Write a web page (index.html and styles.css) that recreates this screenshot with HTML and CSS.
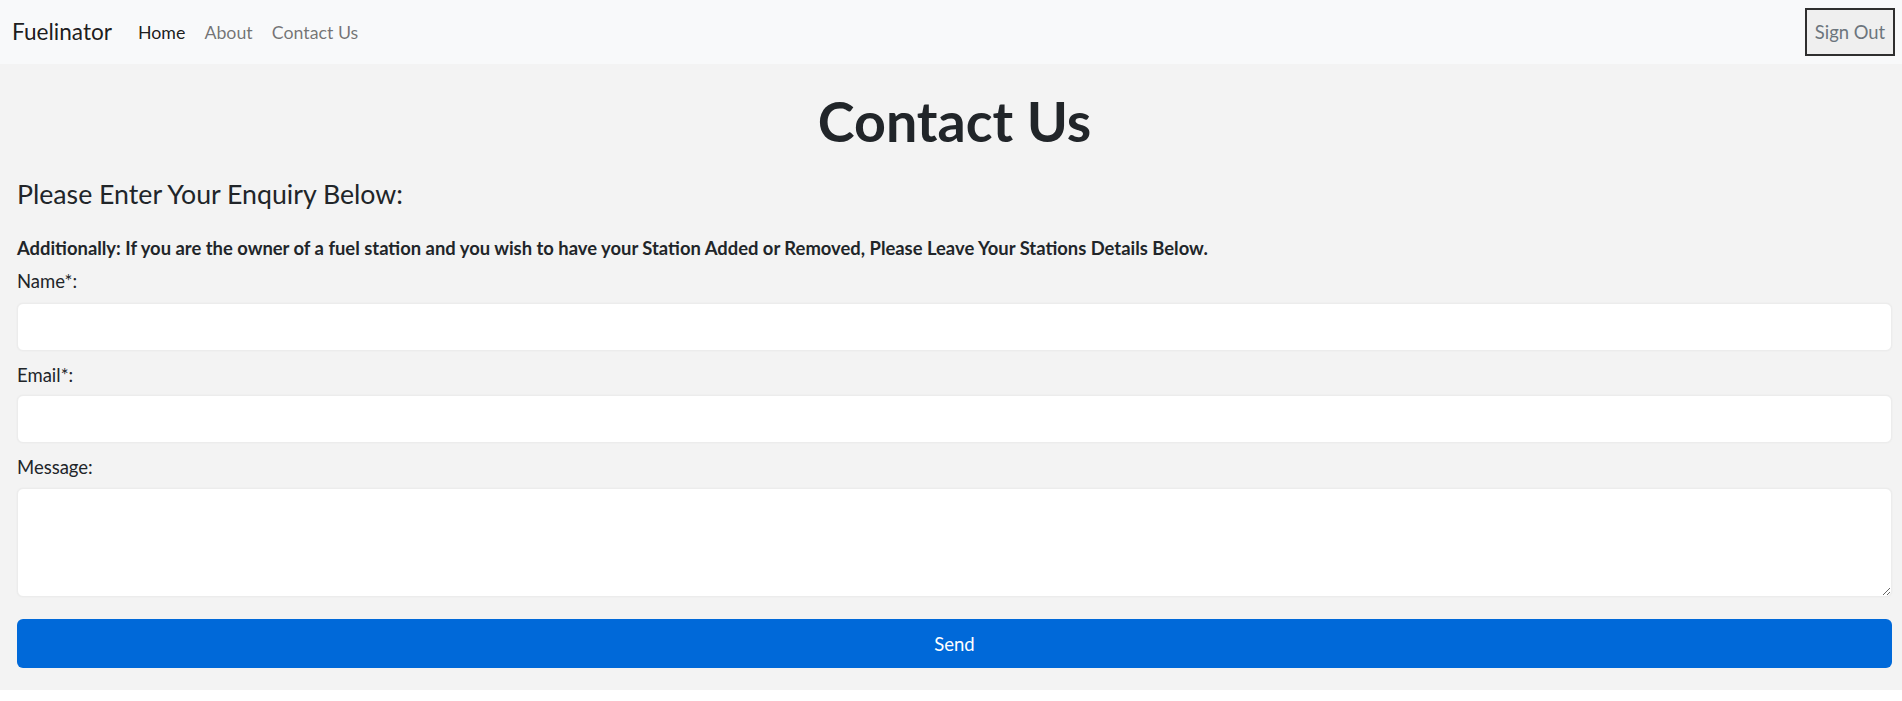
FILE: index.html
```html
<!DOCTYPE html>
<html lang="en">
<head>
<meta charset="utf-8">
<title>Fuelinator - Contact Us</title>
<link rel="stylesheet" href="styles.css">
</head>
<body>
<nav class="navbar">
  <a class="brand" href="#">Fuelinator</a>
  <ul class="nav-links">
    <li><a class="nav-link active" href="#">Home</a></li>
    <li><a class="nav-link" href="#">About</a></li>
    <li><a class="nav-link" href="#">Contact Us</a></li>
  </ul>
  <button class="signout" type="button">Sign Out</button>
</nav>
<main class="content">
  <h1 class="title">Contact Us</h1>
  <h3 class="subtitle">Please Enter Your Enquiry Below:</h3>
  <p class="note">Additionally: If you are the owner of a fuel station and you wish to have your Station Added or Removed, Please Leave Your Stations Details Below.</p>
  <form class="form">
    <div class="group">
      <label class="label" for="name">Name*:</label>
      <input class="field" id="name" type="text">
    </div>
    <div class="group">
      <label class="label" for="email">Email*:</label>
      <input class="field" id="email" type="email">
    </div>
    <div class="group">
      <label class="label" for="message">Message:</label>
      <textarea class="field area" id="message"></textarea>
    </div>
    <button class="send" type="button">Send</button>
  </form>
</main>
</body>
</html>
```

FILE: styles.css
```css
* { box-sizing: border-box; }
html, body { margin: 0; padding: 0; }
body {
  background: #ffffff;
  color: #212529;
  font-family: Lato, "Open Sans", sans-serif;
  font-size: 18.5px;
}
.navbar {
  height: 64px;
  background: #f8f9fa;
  display: flex;
  align-items: center;
  padding: 0 7px 0 12px;
}
.brand {
  font-size: 22.6px;
  line-height: 36px;
  color: rgba(0,0,0,0.9);
  text-decoration: none;
  margin-right: 16.5px;
}
.nav-links {
  list-style: none;
  margin: 0;
  padding: 0;
  display: flex;
  flex: 1;
}
.nav-link {
  display: block;
  padding: 0 9.5px;
  font-size: 17.8px;
  line-height: 28px;
  color: rgba(0,0,0,0.55);
  text-decoration: none;
}
.nav-link.active { color: rgba(0,0,0,0.9); }
.signout {
  width: 90px;
  height: 48px;
  background: #efefef;
  border: 2px solid #2f2f2f;
  color: #6c757d;
  font-family: Lato, "Open Sans", sans-serif;
  font-size: 18.4px;
  padding: 0;
}
.content {
  background: #f3f3f3;
  padding: 22px 10px 22px 17px;
}
.title {
  margin: 0;
  text-align: center;
  font-size: 55.6px;
  line-height: 69px;
  font-weight: 700;
}
.subtitle {
  margin: 22px 0 0;
  font-size: 26.7px;
  line-height: 34px;
  font-weight: 400;
}
.note {
  margin: 23px 0 0;
  font-size: 18.4px;
  font-weight: 700;
  line-height: 28.8px;
}
.form { margin-top: 4px; }
.group { margin-bottom: 10px; }
.label {
  display: block;
  line-height: 28.8px;
  margin-bottom: 7px;
}
.group + .group .label { margin-bottom: 6px; }
.field {
  display: block;
  width: 100%;
  height: 48px;
  background: #fff;
  border: 1px solid #ececec;
  border-radius: 6px;
  box-shadow: 0 0 2px rgba(0,0,0,0.05);
  font-family: inherit;
  font-size: 18.5px;
}
.area {
  height: 109px;
  resize: vertical;
}
.send {
  display: block;
  width: 100%;
  height: 49px;
  margin-top: 22px;
  background: #0069d9;
  color: #fff;
  border: none;
  border-radius: 6px;
  font-family: Lato, "Open Sans", sans-serif;
  font-size: 18.5px;
}
```
